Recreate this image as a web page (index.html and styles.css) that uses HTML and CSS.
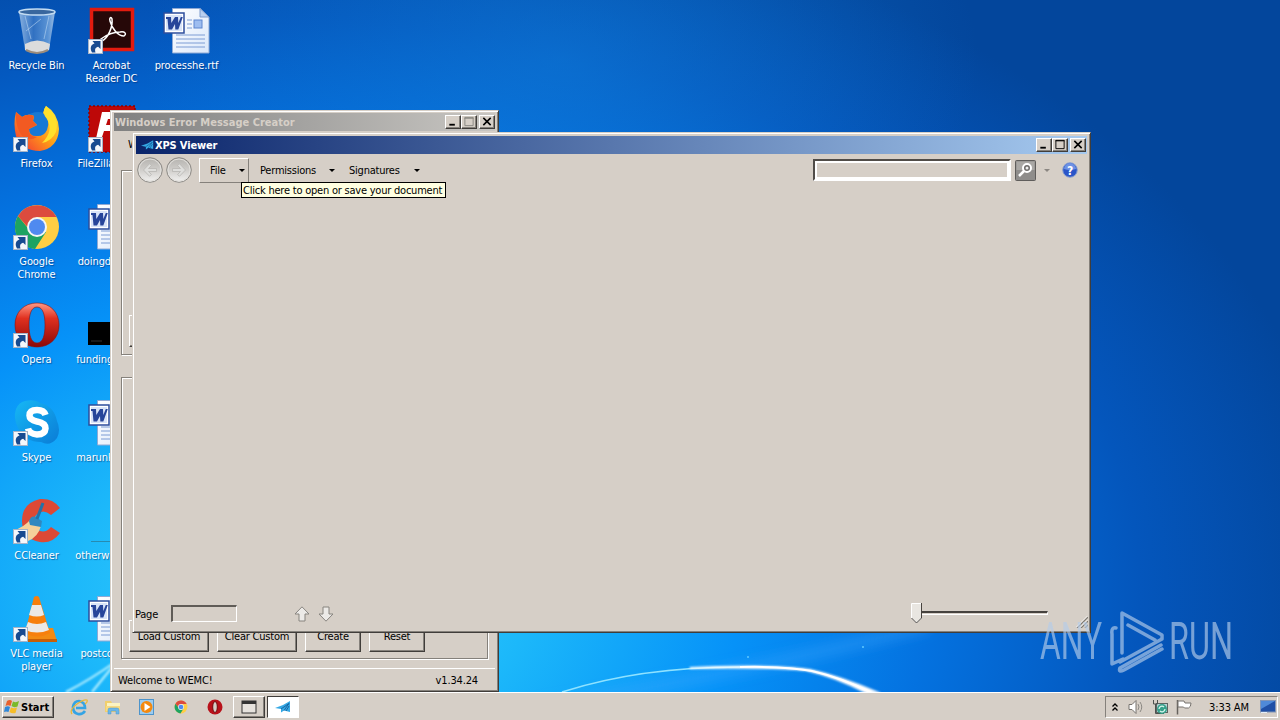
FILE: index.html
```html
<!DOCTYPE html>
<html lang="en">
<head>
    <meta charset="UTF-8">
    <meta name="viewport" content="width=device-width, initial-scale=1.0">
    <title>Desktop</title>
    <link rel="stylesheet" href="styles.css">
</head>
<body>

<!-- Shared icons -->
<svg class="defs" width="0" height="0">
    <defs>
        <linearGradient id="gBlue" x1="0" y1="0" x2="1" y2="1"><stop offset="0" stop-color="#16b8f5"/><stop offset="1" stop-color="#0a7cd6"/></linearGradient>
        <linearGradient id="gRed" x1="0" y1="0" x2="0" y2="1"><stop offset="0" stop-color="#ff9a86"/><stop offset=".35" stop-color="#e0301f"/><stop offset="1" stop-color="#8c0808"/></linearGradient>
        <linearGradient id="gFox" x1="1" y1="0" x2="0" y2="1"><stop offset="0" stop-color="#fff13a"/><stop offset=".5" stop-color="#ff9c17"/><stop offset="1" stop-color="#f0283c"/></linearGradient>
        <linearGradient id="gBin" x1="0" y1="0" x2="1" y2="0"><stop offset="0" stop-color="#a9c8ea"/><stop offset=".4" stop-color="#3c78c4"/><stop offset=".8" stop-color="#6fa3dc"/><stop offset="1" stop-color="#bdd4ee"/></linearGradient>
        <linearGradient id="gPage" x1="0" y1="0" x2="1" y2="1"><stop offset="0" stop-color="#ffffff"/><stop offset="1" stop-color="#dbe8fa"/></linearGradient>
        <linearGradient id="gNav" x1="0" y1="0" x2="0" y2="1"><stop offset="0" stop-color="#b4b2ae"/><stop offset=".5" stop-color="#d0cecb"/><stop offset="1" stop-color="#f3f3f2"/></linearGradient>
    </defs>
    <symbol id="shortcut" viewBox="0 0 15 15">
        <rect x=".5" y=".5" width="14" height="14" fill="#f4f7fb" stroke="#a6b4c8"/>
        <path d="M4 13.500C1.500 9 3 5.500 6.500 4.500L4.500 2H12.500V10L10.200 7.800C7.500 8.500 6.500 10 7.500 13.500Z" fill="#174a90"/>
    </symbol>
    <symbol id="word" viewBox="0 0 48 48">
        <path d="M9.500 1.500H37l9 8.500V46H9.500Z" fill="url(#gPage)" stroke="#8fa9d4"/>
        <path d="M37 1.500v8.500h9Z" fill="#b9d0f0" stroke="#7f9ccc"/>
        <rect x="31" y="13" width="8" height="8" fill="#9dbdf0" stroke="#5d86cf"/>
        <path d="M24 13h5M24 17h5M24 21h5M13 28h29M13 32h29M13 36h29M13 40h29" stroke="#7c9cd4" fill="none"/>
        <rect x="1" y="6" width="20" height="20" fill="#fff" stroke="#2c4d9c" stroke-width="1.500"/>
        <rect x="3" y="8" width="16" height="16" fill="#d9e4f8"/>
        <path d="M3 10h5l.3 6L12 10h3l.3 6 2.500-6h2l-4.500 12.500h-3L12 17l-3 5.500H5.500L4.500 12H3Z" fill="#27459a"/>
    </symbol>
    <symbol id="chrome" viewBox="0 0 48 48">
        <circle cx="24" cy="24" r="22" fill="#ffce44"/>
        <path d="M24 24H14L5 13A22 22 0 0 0 22 46L33 29Z" fill="#1da362"/>
        <path d="M24 24H14.500L5 13A22 22 0 0 1 43.500 14H24Z" fill="#dc4b3e"/>
        <circle cx="24" cy="24" r="10" fill="#f4f6f4"/>
        <circle cx="24" cy="24" r="8" fill="#4f8af0"/>
    </symbol>
    <symbol id="opera" viewBox="0 0 48 48">
        <path fill-rule="evenodd" d="M24 2C37 2 46 11 46 24S37 46 24 46 2 37 2 24 11 2 24 2ZM24 6C18 6 16 14 16 24S18 42 24 42 32 34 32 24 30 6 24 6Z" fill="url(#gRed)" stroke="#8c1010" stroke-width=".6"/>
    </symbol>
    <symbol id="plane" viewBox="0 0 16 12">
        <path d="M0 7L8 4L15 0V11L9 9.500L6 11.500V8Z" fill="#35a8e4"/>
        <path d="M6 8L14 2.500L9 9.500M11 10l3-5" stroke="#135f9c" stroke-width=".9" fill="none"/>
    </symbol>
    <symbol id="navArrow" viewBox="0 0 26 26">
        <circle cx="13" cy="13" r="12.300" fill="url(#gNav)" stroke="#8c8984"/>
        <circle cx="13" cy="13" r="11" fill="none" stroke="#e2e0dc"/>
        <path d="M19.500 11.500H11.500L14.500 8.500L12.500 6.800L6.500 13L12.500 19.200L14.500 17.500L11.500 14.500H19.500Z" fill="#dededc" stroke="#b8b6b2" stroke-width=".8"/>
    </symbol>
</svg>

<div class="screen">
    <div class="desktop">

        <!-- Wallpaper light trails -->
        <svg class="wallpaper" width="1280" height="692" viewBox="0 0 1280 692">
            <defs>
                <filter id="soft"><feGaussianBlur stdDeviation="1"/></filter>
                <filter id="wide" x="-20%" y="-50%" width="140%" height="200%"><feGaussianBlur stdDeviation="6"/></filter>
            </defs>
            <path d="M500 715Q760 670 930 625" stroke="#46a8ff" stroke-opacity=".35" stroke-width="12" fill="none" filter="url(#wide)"/>
            <path d="M562 692Q640 667 740 667" stroke="#8fe2ff" stroke-width="1.700" fill="none"/>
            <path d="M690 667.500Q770 664 810 669.500Q840 676 880 693L866 693Q835 677 806 670.500Q770 667 690 668.500Z" fill="#fff" stroke="#fff" filter="url(#soft)"/>
            <path d="M740 667Q785 666 812 671Q842 678 872 693" stroke="#fff" stroke-width="2" fill="none"/>
            <path d="M66 692Q90 680 118 660M92 692L118 660" stroke="#b8f1ff" stroke-width="2" fill="none" filter="url(#soft)"/>
            <circle cx="748" cy="657" r="1" fill="#5fc8ff"/>
            <circle cx="863" cy="647" r="1" fill="#5fc8ff"/>
        </svg>

        <!-- Desktop icons -->
        <div class="icons">
            <div class="icon">
                <svg class="pic" viewBox="0 0 48 48">
                    <path d="M6 5L12 43Q24 49 36 43L42 5Z" fill="url(#gBin)" fill-opacity=".8"/>
                    <path d="M12 37Q24 30 37 37L36 43Q24 49 12 43Z" fill="#dcdcdc"/>
                    <path d="M13 43Q24 49 35 43" stroke="#9c8c7c" stroke-width="2" fill="none"/>
                    <path d="M12 9L18 32M36 9L31 32M13 24L28 12" stroke="#b9d6f2" stroke-opacity=".6" fill="none"/>
                    <ellipse cx="24" cy="5" rx="18" ry="3" fill="#39679e" stroke="#c3dcf2" stroke-width="1.500"/>
                </svg>
                <span>Recycle Bin</span>
            </div>
            <div class="icon">
                <svg class="pic" viewBox="0 0 48 48">
                    <circle cx="25" cy="24" r="17" fill="#1778d4"/>
                    <path d="M3 7L9 12Q15 8 21 11L20 16L24 20L16 24Q16 32 25 31Q31 31 34 25Q38 15 30 8Q31 4 33 1Q45 8 46 24Q45 43 27 46Q9 46 3 31Q0 18 3 7Z" fill="url(#gFox)"/>
                    <path d="M3 7L9 12Q15 8 21 11L20 16L24 20L16 24Q15 31 24 32Q14 38 7 28Q2 19 3 7Z" fill="#f25a22"/>
                    <path d="M33 1Q28 7 34 14Q41 26 29 38Q39 36 43 27Q47 12 33 1Z" fill="#ffe02c"/>
                </svg>
                <svg class="arrow"><use href="#shortcut"/></svg>
                <span>Firefox</span>
            </div>
            <div class="icon">
                <svg class="pic"><use href="#chrome"/></svg>
                <svg class="arrow"><use href="#shortcut"/></svg>
                <span>Google<br>Chrome</span>
            </div>
            <div class="icon">
                <svg class="pic"><use href="#opera"/></svg>
                <svg class="arrow"><use href="#shortcut"/></svg>
                <span>Opera</span>
            </div>
            <div class="icon">
                <svg class="pic" viewBox="0 0 48 48">
                    <path d="M12 2Q22 0 27 4Q41 7 44 22Q48 31 44 39Q37 48 28 43Q12 43 5 29Q0 19 3 10Q6 3 12 2Z" fill="url(#gBlue)"/>
                    <path d="M32.500 16Q31 11 24 11Q16.500 11 16.500 16.500Q16.500 21 24 22.500Q32.500 24 32.500 29.500Q32 35.500 24 35.500Q16.500 35 15 29.500" fill="none" stroke="#fff" stroke-width="6.500"/>
                </svg>
                <svg class="arrow"><use href="#shortcut"/></svg>
                <span>Skype</span>
            </div>
            <div class="icon">
                <svg class="pic" viewBox="0 0 48 48">
                    <path d="M47 11L38 18Q30 11 23 18Q18 25 24 32Q31 38 38 30L47 36Q39 47 27 45Q9 42 9 24Q9 6 27 2Q40 1 47 11Z" fill="#dd4935"/>
                    <path d="M1 33Q10 31 18 22L28 29Q25 40 15 44Z" fill="#f5d19a"/>
                    <path d="M16 24Q19 17 24 21L29 24L28 30L17 28Z" fill="#3088c0"/>
                    <path d="M24 22L30 6" stroke="#2472a8" stroke-width="3"/>
                </svg>
                <svg class="arrow"><use href="#shortcut"/></svg>
                <span>CCleaner</span>
            </div>
            <div class="icon">
                <svg class="pic" viewBox="0 0 48 48">
                    <path d="M9 33H40L44 46H2Z" fill="#f28a12"/>
                    <path d="M2 44H44V47H2Z" fill="#c75f06"/>
                    <path d="M21 2Q24 0 26 2L37 38Q24 45 12 38Z" fill="#f77f0c"/>
                    <path d="M19 10H28L31 20Q24 23 16 20ZM15 27Q24 31 33 27L36 35Q24 40 12 35Z" fill="#ece9e6"/>
                </svg>
                <svg class="arrow"><use href="#shortcut"/></svg>
                <span>VLC media<br>player</span>
            </div>

            <div class="icon">
                <svg class="pic" viewBox="0 0 48 48">
                    <rect x="3.500" y="2.500" width="41" height="40" fill="#260808" stroke="#e31b0f" stroke-width="3.500"/>
                    <path d="M14 34C20 31 25 20 24 12C23 9 21 11 22 14C24 22 30 29 36 29C39 27 37 24 32 25C24 25 17 29 13 32C11 35 12 36 14 34Z" fill="none" stroke="#fff" stroke-width="1.500"/>
                </svg>
                <svg class="arrow"><use href="#shortcut"/></svg>
                <span>Acrobat<br>Reader DC</span>
            </div>
            <div class="icon">
                <svg class="pic" viewBox="0 0 48 48">
                    <rect x="1" y="1" width="46" height="46" fill="#bd0808" stroke="#8d0000" stroke-width="1.500" stroke-dasharray="2 2"/>
                    <path d="M14 7H34L32 14H20L18 20H28L26 26H16L12 38H7ZM22 36L28 32L34 38L28 43Z" fill="#fff"/>
                </svg>
                <svg class="arrow"><use href="#shortcut"/></svg>
                <span>FileZilla Client</span>
            </div>
            <div class="icon"><svg class="pic"><use href="#word"/></svg><span>doingdown.rtf</span></div>
            <div class="icon"><svg class="pic" viewBox="0 0 48 48"><path d="M0 21H48V44H0Z" fill="#000"/><path d="M3 40H14" stroke="#333"/></svg><span>fundingad.png</span></div>
            <div class="icon"><svg class="pic"><use href="#word"/></svg><span>marunknow.rtf</span></div>
            <div class="icon"><svg class="pic" viewBox="0 0 48 48"><path d="M3 44.500H48" stroke="#278bb0"/></svg><span>otherwhich.jpg</span></div>
            <div class="icon"><svg class="pic"><use href="#word"/></svg><span>postcomp.rtf</span></div>

            <div class="icon"><svg class="pic"><use href="#word"/></svg><span>processhe.rtf</span></div>
        </div>

        <!-- Windows Error Message Creator -->
        <div class="window wemc">
            <div class="titlebar inactive">
                <span class="title">Windows Error Message Creator</span>
                <div class="controls">
                    <svg viewBox="0 0 14 12"><path d="M3 9.500H9" stroke="#000" stroke-width="2"/></svg>
                    <svg class="disabled" viewBox="0 0 14 12"><path d="M2.500 1.500H11.500V10.500H2.500ZM2 2.500H12" stroke="#87857f" fill="none"/></svg>
                    <svg class="close" viewBox="0 0 14 12"><path d="M3 2L11 10M11 2L3 10" stroke="#000" stroke-width="1.700"/></svg>
                </div>
            </div>
            <div class="wemc-body">
                <label>W</label>
                <div class="group message"><div class="btn side"></div></div>
                <div class="group custom">
                    <div class="btn w80">Load Custom</div>
                    <div class="btn w80">Clear Custom</div>
                    <div class="btn">Create</div>
                    <div class="btn">Reset</div>
                </div>
            </div>
            <div class="status"><span>Welcome to WEMC!</span><span>v1.34.24</span></div>
        </div>

        <!-- XPS Viewer -->
        <div class="window xps">
            <div class="titlebar">
                <svg class="appicon"><use href="#plane"/></svg>
                <span class="title">XPS Viewer</span>
                <div class="controls">
                    <svg viewBox="0 0 14 12"><path d="M3 9.500H9" stroke="#000" stroke-width="2"/></svg>
                    <svg viewBox="0 0 14 12"><path d="M2.500 1.500H11.500V10.500H2.500ZM2 2H12" stroke="#000" fill="none"/></svg>
                    <svg class="close" viewBox="0 0 14 12"><path d="M3 2L11 10M11 2L3 10" stroke="#000" stroke-width="1.700"/></svg>
                </div>
            </div>
            <div class="toolbar">
                <div class="nav">
                    <svg><use href="#navArrow"/></svg>
                    <svg class="flip"><use href="#navArrow"/></svg>
                </div>
                <div class="menu active"><span>File</span><i class="caret"></i></div>
                <div class="menu"><span>Permissions</span><i class="caret"></i></div>
                <div class="menu"><span>Signatures</span><i class="caret"></i></div>
                <div class="search"></div>
                <svg class="find" viewBox="0 0 21 21">
                    <rect x=".5" y=".5" width="20" height="20" rx="1" fill="#8f8d8b" stroke="#5f5d5b"/>
                    <path d="M1.500 10H19.500V1.500H1.500Z" fill="#aaa8a5"/>
                    <circle cx="12" cy="8" r="4" fill="#6e6c6a" stroke="#fff" stroke-width="2"/>
                    <path d="M9 11L4 16" stroke="#fff" stroke-width="2.500"/>
                    <circle cx="12" cy="8" r="1.500" fill="#eee"/>
                </svg>
                <i class="caret dim"></i>
                <svg class="help" viewBox="0 0 16 16">
                    <circle cx="8" cy="8" r="7.300" fill="#2a55c8" stroke="#8ea2ce"/>
                    <path d="M2 7A6 6 0 0 1 14 7Q8 9 2 7Z" fill="#6d91e4"/>
                    <text x="8" y="12.500">?</text>
                </svg>
            </div>
            <div class="page"></div>
            <div class="pagebar">
                <span>Page</span>
                <div class="field"></div>
                <div class="steps">
                    <svg viewBox="0 0 16 16"><path d="M8 .8L15 8H11V15H5V8H1Z" fill="#eceae7" stroke="#87847f"/></svg>
                    <svg viewBox="0 0 16 16"><path d="M8 15.200L15 8H11V1H5V8H1Z" fill="#eceae7" stroke="#87847f"/></svg>
                </div>
                <div class="slider">
                    <svg class="thumb" viewBox="0 0 11 21"><path d="M.5 .5H10.500V15L5.500 20L.5 15Z" fill="#e9e6e1" stroke="#fff"/><path d="M10.500 0V15L5.500 20L.5 15" fill="none" stroke="#46423e"/></svg>
                    <div class="track"></div>
                </div>
                <svg class="grip" viewBox="0 0 12 12"><path d="M1 12L12 1M5 12L12 5M9 12L12 9" stroke="#7f7b74" stroke-width="1.300"/><path d="M0 11.500L11.500 0M4 11.500L12 3.500" stroke="#fff" stroke-width=".8"/></svg>
            </div>
        </div>

        <div class="tooltip">Click here to open or save your document</div>

        <!-- Watermark -->
        <svg class="watermark" width="204" height="70" viewBox="0 0 204 70">
            <text x="4" y="53" textLength="62" lengthAdjust="spacingAndGlyphs">ANY</text>
            <text x="133" y="53" textLength="64" lengthAdjust="spacingAndGlyphs">RUN</text>
            <path d="M86 47V7L126 29V33L84 56M92 19L119 34M80 22Q75 21 76 28V58L87 53M84 62L125 39M84 62Q82 67 88 64L126 43"/>
        </svg>
    </div>

    <!-- Taskbar -->
    <div class="taskbar">
        <div class="start">
            <svg viewBox="0 0 16 16">
                <path d="M3 2Q6 0 8 2L6.500 7Q4 5.500 1.500 7Z" fill="#e8602c"/>
                <path d="M9 2.500Q12 4 15 2L13.500 7.500Q10 9 7.500 7Z" fill="#7ab92c"/>
                <path d="M1 8Q4 6.500 6 8L4.500 13Q2 12 0 13Z" fill="#2f87d8"/>
                <path d="M7 8.500Q10 10 13 8.500L11.500 14Q8 15 5.500 13Z" fill="#f6bd28"/>
            </svg>
            <b>Start</b>
        </div>
        <div class="quick">
            <svg viewBox="0 0 18 18"><path d="M15 13Q12 17 8 16Q3 15 3 9Q4 3 9 3Q15 4 15 10H6" fill="none" stroke="#35a4e4" stroke-width="2.700"/><path d="M2 16Q-1 12 7 6Q14 1 17 2Q18 4 15 6" fill="none" stroke="#e9b838" stroke-width="1.300"/></svg>
            <svg viewBox="0 0 18 18"><path d="M1 3H7L8 5H15V14H1Z" fill="#f1cf6c"/><path d="M3 5H16V9H3Z" fill="#fbf3c2"/><path d="M2 8H16V13H2Z" fill="#f6da83"/><path d="M4 16V12Q4 10 6 10H13Q15 10 15 12V16H12V13H7V16Z" fill="#6cb6e8" stroke="#4a94c8" stroke-width=".5"/></svg>
            <svg viewBox="0 0 18 18"><rect x="1.500" y="1.500" width="14" height="15" fill="#9cccf0" stroke="#4d94cb"/><circle cx="8.500" cy="9" r="6" fill="#f4890e"/><path d="M6.500 5L12.500 9L6.500 13Z" fill="#fff"/></svg>
            <svg class="small" viewBox="0 0 48 48"><use href="#chrome" width="48" height="48"/></svg>
            <svg viewBox="0 0 18 18"><circle cx="9" cy="9" r="7.500" fill="#b8111a"/><ellipse cx="9" cy="9" rx="2.300" ry="5.500" fill="#d6cfc7" stroke="#70080c"/></svg>
        </div>
        <div class="task"><svg viewBox="0 0 16 14"><rect x="1" y="1" width="14" height="12" fill="#e6e2dd" stroke="#333"/><path d="M1 2.500H15" stroke="#333" stroke-width="3"/></svg></div>
        <div class="task pressed"><svg viewBox="0 0 16 12"><use href="#plane" width="16" height="12"/></svg></div>
        <div class="tray">
            <svg class="chev" viewBox="0 0 8 10"><path d="M1.500 4.500L4 2L6.500 4.500M1.500 8.500L4 6L6.500 8.500" fill="none" stroke="#000" stroke-width="1.300"/></svg>
            <svg class="sound" viewBox="0 0 16 16"><path d="M1 5.500H4L8 1.500V14.500L4 10.500H1Z" fill="#fff" stroke="#77736e"/><path d="M10 5Q12 8 10 11M12 3Q15.500 8 12 13" fill="none" stroke="#8b8883"/></svg>
            <svg class="net" viewBox="0 0 16 16"><rect x="4.500" y="4.500" width="11" height="9" fill="#b9d3d6" stroke="#5c6462"/><path d="M1.500 1V5H5.500V1M3.500 5V14.500H12" fill="none" stroke="#4d514e"/><circle cx="10" cy="10" r="5" fill="#35a08a"/><path d="M7 10A3 3 0 0 1 12 8M13 10A3 3 0 0 1 8 12" fill="none" stroke="#d6f4ec" stroke-width="1.300"/></svg>
            <svg class="flag" viewBox="0 0 16 16"><path d="M1.500 1V15.500" stroke="#66625d" stroke-width="1.500"/><path d="M2 2H8L9 4H15Q15 8 12.500 9H8.500L7.500 8H2Z" fill="#fff" stroke="#77736e"/></svg>
            <span class="clock">3:33 AM</span>
            <svg class="peek" viewBox="0 0 16 14"><rect x=".5" y=".5" width="15" height="11.500" fill="#1f50a6" stroke="#8296b6"/><path d="M1 1H15L1 9Z" fill="#4f8ad8"/><path d="M1 12.500H7" stroke="#e4eef8"/></svg>
        </div>
    </div>
</div>

</body>
</html>
```
FILE: styles.css
```css
* {
    box-sizing: border-box;
}

body {
    margin: 0;
    overflow: hidden;
    font-family: "DejaVu Sans Condensed", "DejaVu Sans", sans-serif;
    font-size: 11px;
    line-height: 13px;
    letter-spacing: -0.22px;
    color: #000;
}

svg {
    display: block;
    flex: none;
}

.defs {
    position: absolute;
}

.screen {
    width: 1280px;
    height: 720px;
    display: flex;
    flex-direction: column;
}

.desktop {
    position: relative;
    height: 692px;
    overflow: hidden;
    background:
        radial-gradient(ellipse 420px 260px at 560px 60px, rgba(20, 140, 230, 0.4), rgba(20, 140, 230, 0) 100%),
        radial-gradient(ellipse 1050px 710px at 300px 590px, #3fd4ff 0, #1cb8fa 22%, #0692f8 42%, #0472e0 60%, #0456bc 80%, #03469c 100%);
}

.wallpaper {
    position: absolute;
    left: 0;
    top: 0;
}

/* Desktop icons */
.icons {
    position: relative;
    display: grid;
    grid-auto-flow: column;
    grid-template-rows: repeat(7, 98px);
    grid-auto-columns: 75px;
    margin-left: -1px;
    padding-top: 7px;
}

.icon {
    position: relative;
    display: flex;
    flex-direction: column;
    align-items: center;
    color: #fff;
    letter-spacing: -0.1px;
    text-align: center;
    text-shadow: 1px 1px 1px rgba(0, 30, 90, 0.5);
    white-space: nowrap;
}

.icon .pic {
    width: 48px;
    height: 48px;
    margin-bottom: 4px;
}

.icon .arrow {
    position: absolute;
    left: 14px;
    top: 32px;
    width: 15px;
    height: 15px;
}

/* Windows */
.window {
    position: absolute;
    display: flex;
    flex-direction: column;
    background: #d6cfc7;
    border: 1px solid #d6cfc7;
    border-right-color: #403d3a;
    border-bottom-color: #403d3a;
    box-shadow: inset 1px 1px #fff, inset -1px -1px #85817b;
    padding: 3px;
}

.wemc {
    left: 110px;
    top: 110px;
    width: 389px;
    height: 582px;
    padding-top: 2px;
}

.xps {
    left: 132px;
    top: 132px;
    width: 959px;
    height: 501px;
}

.titlebar {
    display: flex;
    align-items: center;
    height: 18px;
    flex: none;
    padding: 0 1px 0 5px;
    background: linear-gradient(to right, #0a246a, #a6caf0);
    color: #fff;
    font-weight: bold;
    letter-spacing: -0.15px;
}

.titlebar.inactive {
    padding-left: 1px;
    padding-right: 0;
    background: linear-gradient(to right, #808080, #c8c6c2);
    color: #d6cfc7;
    letter-spacing: 0;
}

.appicon {
    width: 13px;
    height: 10px;
    margin-right: 1px;
}

.controls {
    display: flex;
    margin-left: auto;
}

.controls svg {
    width: 16px;
    height: 14px;
    padding-bottom: 1px;
    background: #d6cfc7;
    border: 1px solid #fff;
    border-right-color: #403d3a;
    border-bottom-color: #403d3a;
    box-shadow: inset -1px -1px #85817b;
}

.controls .close {
    margin-left: 2px;
}

/* Error Message Creator */
.wemc-body {
    flex: 1;
    padding: 7px 7px 0;
}

.wemc-body label {
    display: block;
    padding-left: 7px;
    margin-bottom: 19px;
}

.group {
    border: 1px solid #85817b;
    box-shadow: inset 1px 1px #fff, 1px 1px #fff;
}

.message {
    height: 185px;
    padding: 144px 0 0 7px;
    margin-bottom: 22px;
}

.custom {
    display: flex;
    gap: 8px;
    height: 282px;
    padding: 242px 0 0 7px;
}

.btn {
    display: flex;
    align-items: center;
    justify-content: center;
    width: 56px;
    height: 32px;
    border: 1px solid #fff;
    border-right-color: #403d3a;
    border-bottom-color: #403d3a;
    box-shadow: inset -1px -1px #85817b;
}

.w80 {
    width: 80px;
}

.status {
    display: flex;
    justify-content: space-between;
    height: 20px;
    padding: 5px 17px 0 4px;
    border-top: 1px solid #fff;
    letter-spacing: -0.15px;
}

/* XPS Viewer */
.toolbar {
    display: flex;
    align-items: center;
    height: 32px;
    padding: 0 9px 0 1px;
}

.nav {
    display: flex;
    gap: 3px;
    margin-right: 7px;
}

.nav svg {
    width: 26px;
    height: 26px;
}

.flip {
    transform: scaleX(-1);
}

.menu {
    display: flex;
    align-items: center;
    justify-content: space-between;
    width: 89px;
    height: 25px;
    padding: 0 3px 0 11px;
}

.menu + .menu + .menu {
    width: 85px;
}

.menu.active {
    width: 50px;
    border: 1px solid #fff;
    border-right-color: #85817b;
    border-bottom-color: #85817b;
    padding-left: 10px;
}

.caret {
    border: 3px solid transparent;
    border-top-color: #000;
    border-bottom: 0;
}

.caret.dim {
    border-top-color: #8b8782;
    margin: 0 12px 0 8px;
}

.search {
    width: 198px;
    height: 22px;
    margin: 0 4px 0 auto;
    border: 2px solid #fff;
    border-top-color: #504c48;
    border-left-color: #504c48;
    box-shadow: inset 0 0 0 2px #fff;
}

.find {
    width: 21px;
    height: 21px;
}

.help {
    width: 16px;
    height: 16px;
}

.help text {
    font-weight: bold;
    font-size: 12px;
    text-anchor: middle;
    fill: #fff;
}

.page {
    flex: 1;
}

.pagebar {
    display: flex;
    align-items: center;
    height: 31px;
    margin: 0 -2px -1px;
    padding: 0 0 2px 1px;
}

.pagebar span {
    width: 25px;
    padding-top: 1px;
}

.field {
    width: 66px;
    height: 17px;
    margin-left: 11px;
    border: 1px solid #fff;
    border-top: 2px solid #605c57;
    border-left: 2px solid #605c57;
}

.steps {
    display: flex;
    gap: 8px;
    margin-left: 57px;
}

.steps svg {
    width: 16px;
    height: 16px;
}

.slider {
    display: flex;
    align-items: center;
    margin-left: auto;
}

.thumb {
    width: 11px;
    height: 21px;
}

.track {
    width: 126px;
    height: 4px;
    margin-bottom: 2px;
    border: 1px solid #fff;
    border-left: 0;
    border-top: 2px solid #46423e;
}

.grip {
    width: 12px;
    height: 12px;
    align-self: flex-end;
    margin: 0 1px 0 28px;
}

.tooltip {
    position: absolute;
    left: 241px;
    top: 182px;
    width: 205px;
    height: 16px;
    padding: 1px 0 0 1px;
    background: #ffffe1;
    border: 1px solid #000;
    white-space: nowrap;
}

.watermark {
    position: absolute;
    left: 1036px;
    top: 606px;
    opacity: 0.65;
}

.watermark text {
    font-family: Roboto, sans-serif;
    font-weight: 400;
    font-size: 52px;
    letter-spacing: 0;
    fill: #b5cdea;
}

.watermark path {
    fill: none;
    stroke: #b5cdea;
    stroke-width: 3.5;
    stroke-linejoin: round;
    stroke-linecap: round;
}

/* Taskbar */
.taskbar {
    display: flex;
    align-items: center;
    height: 28px;
    padding: 1px 2px 0;
    background: #d6cfc7;
    border-top: 1px solid #fff;
}

.start {
    display: flex;
    align-items: center;
    gap: 1px;
    width: 52px;
    height: 22px;
    padding-left: 1px;
    border: 1px solid #fff;
    border-right-color: #403d3a;
    border-bottom-color: #403d3a;
    box-shadow: inset -1px -1px #85817b;
    letter-spacing: 0;
}

.start svg {
    width: 16px;
    height: 16px;
}

.quick {
    display: flex;
    align-items: center;
    gap: 16px;
    margin: 0 9px 0 16px;
}

.quick svg {
    width: 18px;
    height: 18px;
}

.quick .small {
    width: 14px;
    height: 14px;
    margin: 0 2px;
}

.task {
    display: flex;
    align-items: center;
    justify-content: center;
    width: 32px;
    height: 22px;
    margin-right: 2px;
    border: 1px solid #fff;
    border-right-color: #403d3a;
    border-bottom-color: #403d3a;
    box-shadow: inset -1px -1px #85817b;
}

.task svg {
    width: 16px;
    height: 14px;
}

.task.pressed {
    background: #fff;
    border-color: #403d3a #fff #fff #403d3a;
    box-shadow: none;
}

.tray {
    display: flex;
    align-items: center;
    width: 173px;
    height: 22px;
    margin-left: auto;
    padding: 0 1px 0 5px;
    border: 1px solid #fff;
    border-top-color: #85817b;
    border-left-color: #85817b;
}

.chev {
    width: 8px;
    height: 10px;
    margin-right: 9px;
}

.sound,
.net,
.flag {
    width: 16px;
    height: 16px;
    margin-right: 8px;
}

.clock {
    margin-left: 9px;
    letter-spacing: -0.1px;
}

.peek {
    width: 16px;
    height: 14px;
    margin-left: auto;
}
```
